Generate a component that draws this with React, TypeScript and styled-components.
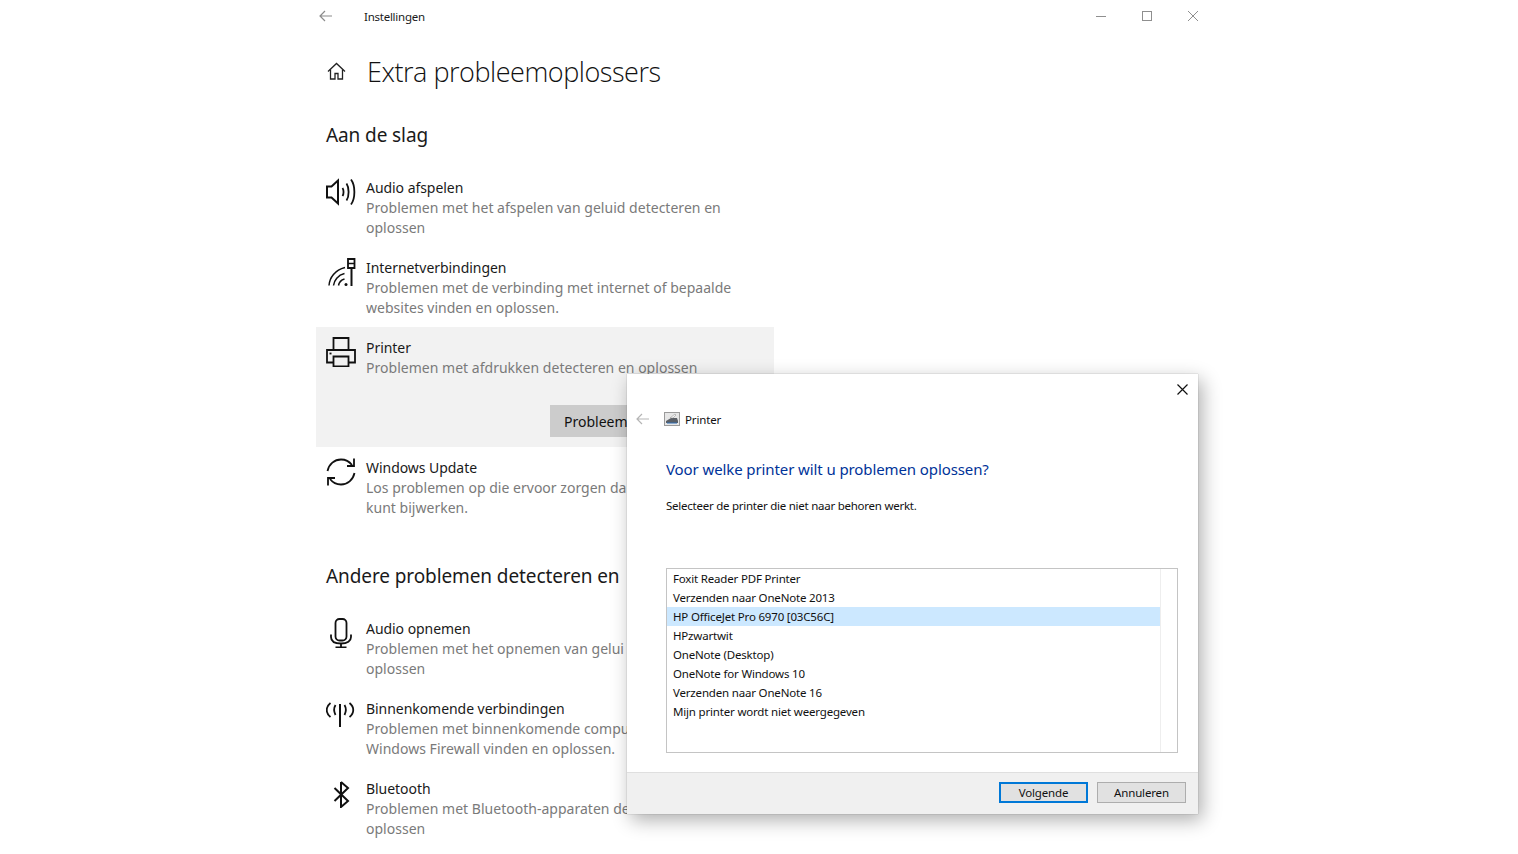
import styled, { createGlobalStyle } from "styled-components";
import { ReactNode } from "react";

const GlobalStyle = createGlobalStyle`
  html, body {
    margin: 0;
    height: 100%;
    background: #ffffff;
    overflow: hidden;
    font-family: "Noto Sans", "Open Sans", sans-serif;
  }
`;

const Page = styled.div`
  position: relative;
  width: 1518px;
  height: 854px;
  overflow: hidden;
  padding-left: 316px;
  box-sizing: border-box;
`;

const SettingsWindow = styled.div`
  width: 894px;
  display: flex;
  flex-direction: column;
`;

const TitleBar = styled.div`
  height: 32px;
  display: flex;
  align-items: center;
`;

const BackSlot = styled.div`
  width: 48px;
  display: flex;
  padding-left: 3px;
  box-sizing: border-box;
`;

const AppName = styled.span`
  font-size: 11.5px;
  color: #1a1a1a;
  letter-spacing: -0.25px;
`;

const WindowButtons = styled.div`
  margin-left: auto;
  display: flex;
  width: 138px;
  margin-right: -6px;
`;

const WindowButton = styled.div`
  width: 46px;
  display: flex;
  justify-content: center;
  align-items: center;
`;

const Header = styled.div`
  height: 56px;
  margin-top: 11px;
  display: flex;
  align-items: center;
  padding-left: 11px;
  gap: 21px;
`;

const PageTitle = styled.h1`
  margin: 0;
  font-size: 27px;
  font-weight: 300;
  color: #111;
  letter-spacing: -0.46px;
  font-family: "Open Sans", sans-serif;
`;

const SectionTitle = styled.h2<{ $top: number; $bottom: number }>`
  margin: ${(p) => p.$top}px 0 ${(p) => p.$bottom}px 10px;
  font-size: 19px;
  line-height: 28px;
  font-weight: 400;
  color: #1a1a1a;
  white-space: nowrap;
  letter-spacing: -0.1px;
`;

const Row = styled.div<{ $active?: boolean }>`
  width: 458px;
  box-sizing: border-box;
  padding: 11px 10px 9px;
  display: grid;
  grid-template-columns: 30px 1fr;
  column-gap: 10px;
  background: ${(p) => (p.$active ? "#f2f2f2" : "transparent")};
`;

const RowIcon = styled.div`
  display: flex;
  justify-content: center;
  height: 30px;
  margin-top: -1px;
`;

const RowText = styled.div`
  min-width: 0;
`;

const RowTitle = styled.div`
  font-size: 14px;
  line-height: 20px;
  color: #1a1a1a;
  letter-spacing: -0.05px;
`;

const RowDesc = styled.div`
  font-size: 14px;
  line-height: 20px;
  color: #7a7a7a;
  letter-spacing: 0.02px;
  white-space: nowrap;
`;

const RowAction = styled.div`
  grid-column: 1 / -1;
  display: flex;
  justify-content: flex-end;
  padding-top: 27px;
  padding-bottom: 1px;
`;

const RunButton = styled.div`
  width: 214px;
  height: 32px;
  background: #cccccc;
  box-sizing: border-box;
  padding-left: 14px;
  font-size: 14px;
  line-height: 33px;
  color: #111;
`;

const Dialog = styled.div`
  position: absolute;
  left: 627px;
  top: 374px;
  width: 571px;
  height: 440px;
  background: #fff;
  box-shadow: 0 0 1px rgba(0, 0, 0, 0.35), 4px 6px 18px rgba(0, 0, 0, 0.32);
  display: flex;
  flex-direction: column;
`;

const DialogClose = styled.div`
  height: 30px;
  display: flex;
  justify-content: flex-end;
  align-items: center;
  padding-right: 10px;
`;

const DialogNav = styled.div`
  height: 30px;
  display: flex;
  align-items: center;
  padding-left: 9px;
`;

const DialogNavIcon = styled.div`
  display: flex;
  margin-left: 14px;
  margin-right: 5px;
`;

const DialogNavText = styled.span`
  font-size: 11.5px;
  color: #111;
  letter-spacing: -0.16px;
`;

const DialogBody = styled.div`
  flex: 1;
  padding: 24px 20px 0 39px;
  display: flex;
  flex-direction: column;
`;

const DialogHeading = styled.div`
  font-size: 15px;
  line-height: 22px;
  color: #003399;
  letter-spacing: -0.1px;
`;

const DialogHint = styled.div`
  margin-top: 17px;
  font-size: 11.5px;
  line-height: 18px;
  color: #111;
  letter-spacing: -0.25px;
`;

const PrinterList = styled.div`
  margin-top: 53px;
  height: 185px;
  box-sizing: border-box;
  border: 1px solid #c4c4c4;
  display: flex;
`;

const PrinterItems = styled.div`
  flex: 1;
`;

const ScrollTrack = styled.div`
  width: 16px;
  border-left: 1px solid #eeeeee;
`;

const PrinterItem = styled.div<{ $selected?: boolean }>`
  height: 19px;
  line-height: 19px;
  padding-left: 6px;
  font-size: 11.5px;
  color: #111;
  letter-spacing: -0.18px;
  background: ${(p) => (p.$selected ? "#cce8ff" : "transparent")};
`;

const DialogFooter = styled.div`
  height: 42px;
  box-sizing: border-box;
  border-top: 1px solid #dfdfdf;
  background: #f0f0f0;
  display: flex;
  align-items: flex-start;
  justify-content: flex-end;
  gap: 9px;
  padding: 9px 12px 0 0;
`;

const FooterButton = styled.div<{ $primary?: boolean }>`
  width: 89px;
  height: 21px;
  box-sizing: border-box;
  border: ${(p) => (p.$primary ? "2px solid #0078d7" : "1px solid #adadad")};
  background: #e1e1e1;
  font-size: 11.5px;
  letter-spacing: -0.16px;
  color: #111;
  display: flex;
  align-items: center;
  justify-content: center;
`;

const Line = ({ children }: { children: ReactNode }) => (
  <svg width="30" height="30" viewBox="0 0 30 30" fill="none" stroke="#111" strokeWidth="1.8">
    {children}
  </svg>
);

const SpeakerIcon = () => (
  <Line>
    <path d="M1 9.500h4.500l6.500-6v23l-6.500-6H1z" strokeWidth="2" />
    <path d="M16.500 11c1.400 2 1.400 6 0 8" />
    <path d="M20.500 6.500c2.800 4 2.800 13 0 17" />
    <path d="M25 2.500c4.500 6 4.500 19 0 25" />
  </Line>
);

const NetworkIcon = () => (
  <Line>
    <path d="M3 28.500c.5-8 6-15.500 16-18" strokeWidth="1.500" />
    <path d="M7.500 28.500c.5-5 4.500-10.500 11-12" strokeWidth="1.500" />
    <path d="M12.500 28.500c.5-2.800 2.500-5.500 6-6.500" strokeWidth="1.500" />
    <path d="M22 11V2h6.500v9z" strokeWidth="1.800" />
    <path d="M22 6.500h6.500" strokeWidth="1.500" />
    <path d="M25.500 11v18" strokeWidth="2" />
    <circle cx="20" cy="27.500" r="1.500" fill="#111" stroke="none" />
  </Line>
);

const PrinterIcon = () => (
  <Line>
    <path d="M7.500 13V1h15v12" />
    <path d="M7.500 25.500H1V13h28v12.500h-6.500" />
    <path d="M7.500 19.500h15v10h-15z" />
    <path d="M3.500 16.500h2" />
  </Line>
);

const SyncIcon = () => (
  <Line>
    <path d="M1.500 14C3 7 8.500 2.500 15 2.500c4.500 0 8.500 2.200 11 5.500" />
    <path d="M28 1.500v7.500h-7" />
    <path d="M28.500 16C27 23 21.500 27.500 15 27.500c-4.500 0-8.500-2.200-11-5.500" />
    <path d="M2 28.500V21h7" />
  </Line>
);

const MicIcon = () => (
  <Line>
    <rect x="9.500" y="1" width="11" height="21.500" rx="4" />
    <path d="M5 16.500v2.500c0 4 3.500 6.500 10 6.500s10-2.500 10-6.500v-2.500" />
    <path d="M15 25.500V29M9.500 29.500h11" />
  </Line>
);

const AntennaIcon = () => (
  <Line>
    <path d="M14 6v23" strokeWidth="2" />
    <path d="M9.500 7c-1.500 2.500-1.500 7 0 10" />
    <path d="M4.500 5c-5 4-5 10 0 14" />
    <path d="M18.500 7c1.500 2.500 1.500 7 0 10" />
    <path d="M23.500 5c5 4 5 10 0 14" />
  </Line>
);

const BluetoothIcon = () => (
  <Line>
    <path d="M15 4v25l7-6L8.500 10" strokeWidth="2" />
    <path d="M15 4l7 6L8.500 23" strokeWidth="2" />
  </Line>
);

const BackArrow = ({ color }: { color: string }) => (
  <svg width="14" height="12" viewBox="0 0 14 12" fill="none" stroke={color} strokeWidth="1.200">
    <path d="M13 6H1M6 1L1 6l5 5" />
  </svg>
);

const SmallPrinter = () => (
  <svg width="16" height="14" viewBox="0 0 16 14">
    <rect x="0.500" y="0.500" width="15" height="13" fill="#e6e6e6" stroke="#9a9a9a" />
    <path d="M2 9l5-3h6l1 3v2H2z" fill="#5a5f66" />
    <path d="M6 6l5-4 1 1-3 3z" fill="#f4f4f4" stroke="#888" strokeWidth="0.500" />
    <path d="M3 11h10" stroke="#2f6fb5" />
  </svg>
);

type Item = {
  icon: ReactNode;
  title: string;
  desc: string[];
  active?: boolean;
};

// the right part of the lower rows lies behind the dialog, only what shows is written
const troubleshooters: Item[] = [
  {
    icon: <SpeakerIcon />,
    title: "Audio afspelen",
    desc: ["Problemen met het afspelen van geluid detecteren en", "oplossen"],
  },
  {
    icon: <NetworkIcon />,
    title: "Internetverbindingen",
    desc: ["Problemen met de verbinding met internet of bepaalde", "websites vinden en oplossen."],
  },
  {
    icon: <PrinterIcon />,
    title: "Printer",
    desc: ["Problemen met afdrukken detecteren en oplossen"],
    active: true,
  },
  {
    icon: <SyncIcon />,
    title: "Windows Update",
    desc: ["Los problemen op die ervoor zorgen da", "kunt bijwerken."],
  },
];

const others: Item[] = [
  {
    icon: <MicIcon />,
    title: "Audio opnemen",
    desc: ["Problemen met het opnemen van gelui", "oplossen"],
  },
  {
    icon: <AntennaIcon />,
    title: "Binnenkomende verbindingen",
    desc: ["Problemen met binnenkomende compu", "Windows Firewall vinden en oplossen."],
  },
  {
    icon: <BluetoothIcon />,
    title: "Bluetooth",
    desc: ["Problemen met Bluetooth-apparaten de", "oplossen"],
  },
];

const printers = [
  "Foxit Reader PDF Printer",
  "Verzenden naar OneNote 2013",
  "HP OfficeJet Pro 6970 [03C56C]",
  "HPzwartwit",
  "OneNote (Desktop)",
  "OneNote for Windows 10",
  "Verzenden naar OneNote 16",
  "Mijn printer wordt niet weergegeven",
];

const Troubleshooter = ({ item }: { item: Item }) => (
  <Row $active={item.active}>
    <RowIcon>{item.icon}</RowIcon>
    <RowText>
      <RowTitle>{item.title}</RowTitle>
      {item.desc.map((line) => (
        <RowDesc key={line}>{line}</RowDesc>
      ))}
    </RowText>
    {item.active && (
      <RowAction>
        <RunButton>Probleem</RunButton>
      </RowAction>
    )}
  </Row>
);

const App = () => {
  return (
    <Page>
      <GlobalStyle />
      <SettingsWindow>
        <TitleBar>
          <BackSlot>
            <BackArrow color="#8c8c8c" />
          </BackSlot>
          <AppName>Instellingen</AppName>
          <WindowButtons>
            <WindowButton>
              <svg width="10" height="10" viewBox="0 0 10 10" stroke="#8f8f8f">
                <path d="M0 5.500h10" />
              </svg>
            </WindowButton>
            <WindowButton>
              <svg width="10" height="10" viewBox="0 0 10 10" fill="none" stroke="#8f8f8f">
                <rect x="0.500" y="0.500" width="9" height="9" />
              </svg>
            </WindowButton>
            <WindowButton>
              <svg width="10" height="10" viewBox="0 0 10 10" stroke="#8f8f8f">
                <path d="M0 0l10 10M10 0L0 10" />
              </svg>
            </WindowButton>
          </WindowButtons>
        </TitleBar>
        <Header>
          <svg width="19" height="19" viewBox="0 0 19 19" fill="none" stroke="#222" strokeWidth="1.300">
            <path d="M1 9.500L9.500 1.500 18 9.500" />
            <path d="M3.500 7.500v9.500h4.500v-5.500h3V17h4.500V7.500" />
          </svg>
          <PageTitle>Extra probleemoplossers</PageTitle>
        </Header>
        <SectionTitle $top={22} $bottom={18}>
          Aan de slag
        </SectionTitle>
        {troubleshooters.map((item) => (
          <Troubleshooter key={item.title} item={item} />
        ))}
        <SectionTitle $top={35} $bottom={18}>
          Andere problemen detecteren en
        </SectionTitle>
        {others.map((item) => (
          <Troubleshooter key={item.title} item={item} />
        ))}
      </SettingsWindow>
      <Dialog>
        <DialogClose>
          <svg width="11" height="11" viewBox="0 0 11 11" stroke="#111" strokeWidth="1.200">
            <path d="M0.500 0.500l10 10M10.500 0.500l-10 10" />
          </svg>
        </DialogClose>
        <DialogNav>
          <BackArrow color="#b5b5b5" />
          <DialogNavIcon>
            <SmallPrinter />
          </DialogNavIcon>
          <DialogNavText>Printer</DialogNavText>
        </DialogNav>
        <DialogBody>
          <DialogHeading>Voor welke printer wilt u problemen oplossen?</DialogHeading>
          <DialogHint>Selecteer de printer die niet naar behoren werkt.</DialogHint>
          <PrinterList>
            <PrinterItems>
              {printers.map((name, index) => (
                <PrinterItem key={name} $selected={index === 2}>
                  {name}
                </PrinterItem>
              ))}
            </PrinterItems>
            <ScrollTrack />
          </PrinterList>
        </DialogBody>
        <DialogFooter>
          <FooterButton $primary>Volgende</FooterButton>
          <FooterButton>Annuleren</FooterButton>
        </DialogFooter>
      </Dialog>
    </Page>
  );
};

export default App;
